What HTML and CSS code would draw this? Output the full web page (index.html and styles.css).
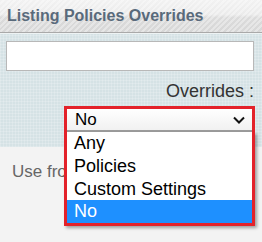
FILE: index.html
```html
<!DOCTYPE html>
<html lang="en">
<head>
  <meta charset="UTF-8">
  <title>Listing Policies Overrides</title>
  <link rel="stylesheet" href="styles.css">
</head>
<body>

<div class="header">Listing Policies Overrides</div>

<!-- filter panel -->
<div class="panel">
  <input class="search" type="text">
  <div class="label">Overrides :</div>
  <div class="picker">
    <div class="select">
      <span>No</span>
      <svg width="12" height="8" viewBox="0 0 12 8"><path d="M1 1.5 L6 6.5 L11 1.5" fill="none" stroke="#111" stroke-width="2"/></svg>
    </div>
    <ul class="options">
      <li>Any</li>
      <li>Policies</li>
      <li>Custom Settings</li>
      <li class="active">No</li>
    </ul>
  </div>
</div>

<div class="content">
  <p class="hint">Use from policies</p>
</div>

</body>
</html>
```

FILE: styles.css
```css
body { margin: 0; width: 262px; height: 242px; font-family: "Liberation Sans", Arial, sans-serif; background: #f3f3f3; overflow: hidden; }

.header {
  height: 32px; line-height: 32px; padding-left: 7px;
  font-size: 16px; font-weight: bold; color: #596a7b;
  background:
    repeating-linear-gradient(-45deg, rgba(255,255,255,0.35) 0 2px, rgba(255,255,255,0) 2px 4px),
    linear-gradient(#f2f2f2 0, #ebebeb 45%, #dbdbdb 55%, #d7d7d7 100%);
  border-bottom: 1px solid #a9a9a9;
}

.panel {
  border-top: 1px solid #eef3f4;
  padding: 7px 8px 15px 6px;
  background:
    repeating-linear-gradient(0deg, rgba(255,255,255,0.18) 0 1px, rgba(255,255,255,0) 1px 3px),
    repeating-linear-gradient(90deg, rgba(255,255,255,0.18) 0 1px, rgba(255,255,255,0) 1px 3px),
    #d5e2e5;
}
.search { display: block; box-sizing: border-box; width: 100%; height: 30px; margin: 0; border: 1px solid #b8b8b8; background: #fff; }
.label { margin-top: 10px; text-align: right; font-size: 18px; color: #333; line-height: 20px; }

.picker { position: relative; width: 185px; margin: 5px -1px 0 auto; border: 3px solid #e3222a; border-bottom: none; background: #fff; }
.select {
  display: flex; justify-content: space-between; align-items: center;
  height: 21px; padding: 0 7px 0 8px; font-size: 17px; line-height: 19px; color: #000;
  background: linear-gradient(#fff, #f1f1f1);
  border-bottom: 2px solid #9c9c9c;
}
.options {
  position: absolute; top: 100%; left: -3px; width: 185px; margin: 0; padding: 0; list-style: none;
  border: 3px solid #e3222a; border-top: none; background: #fff;
  box-shadow: 2px 2px 3px rgba(0,0,0,0.35);
}
.options li { height: 22.75px; line-height: 22.75px; padding-left: 7px; font-size: 18px; color: #000; }
.options li.active { background: #1e90ff; color: #fff; }

.content { padding: 0 12px; }
.hint { margin: 15px 0 0; font-size: 17px; color: #666; white-space: nowrap; }
```
